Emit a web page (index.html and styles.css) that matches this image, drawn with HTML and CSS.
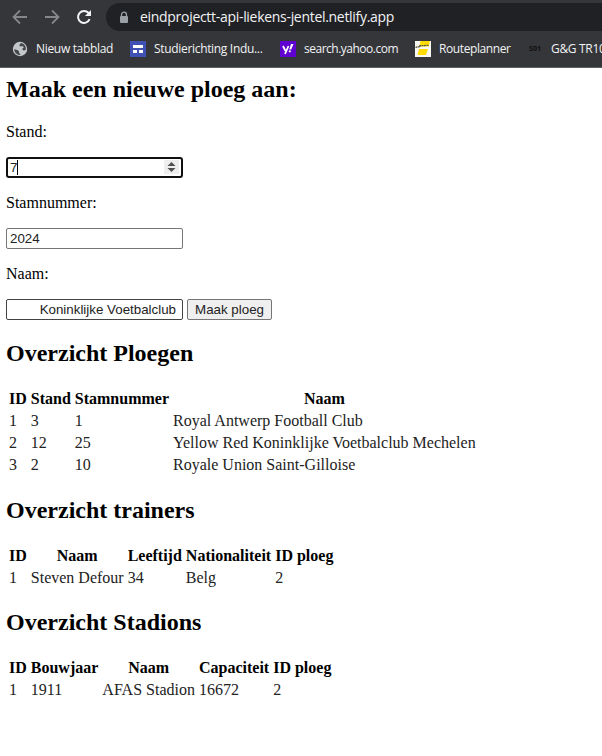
FILE: index.html
```html
<!DOCTYPE html>
<html lang="nl">
<head>
<meta charset="utf-8">
<title>Ploegen</title>
<link rel="stylesheet" href="styles.css">
</head>
<body>
<header class="browser">
  <div class="toolbar">
    <svg class="nav" viewBox="0 0 16 16"><path d="M15 8H2M8 1.5L1.5 8L8 14.5"/></svg>
    <svg class="nav" viewBox="0 0 16 16"><path d="M1 8H14M8 1.5L14.5 8L8 14.5"/></svg>
    <svg class="nav reload" viewBox="0 0 16 16"><path d="M13.6 10.200A6 6 0 1 1 12.600 4L14 5.500"/><path class="tip" d="M15 1v6H9z"/></svg>
    <div class="address">
      <svg class="lock" viewBox="0 0 10 12"><path d="M2.5 5V3.2a2.5 2.5 0 0 1 5 0V5" fill="none" stroke="#9aa0a6" stroke-width="1.3"/><rect x="1" y="4.4" width="8" height="7.2" rx="1" fill="#9aa0a6"/></svg>
      <span class="url">eindprojectt-api-liekens-jentel.netlify.app</span>
    </div>
  </div>
  <nav class="bookmarks">
    <a class="bookmark b1"><svg viewBox="0 0 16 16"><circle cx="8" cy="8" r="7.2" fill="#c4c7ca"/><path d="M2.2 8.2L5.5 9l1.6 1.6v1.2L8.6 14C5 14.200 2.200 11.500 2.200 8.200zM9 2l-1.500 1.700v1.600h3.500l.8 1.300-1.800 1.300 1.500 1.600 2.200-.6C14.500 5.500 12 2.400 9 2z" fill="#45474a"/></svg><span>Nieuw tabblad</span></a>
    <a class="bookmark b2"><svg viewBox="0 0 16 16"><path fill="#3f51b5" d="M0 0h16v16H0z"/><path fill="#fff" d="M3 4h10v3H3zM3 9h4v3H3zM9 9h4v3H9z"/></svg><span>Studierichting Indu...</span></a>
    <a class="bookmark b3"><svg viewBox="0 0 16 16"><path fill="#5f01d1" d="M0 0h16v16H0z"/><path fill="none" stroke="#fff" stroke-width="1.8" d="M3 5l2.500 5M8.500 5L5 13"/><path fill="#fff" d="M11 3h2.500L11.200 8.500H9.300z"/><circle cx="9.800" cy="10.300" r="1.100" fill="#fff"/></svg><span>search.yahoo.com</span></a>
    <a class="bookmark b4"><svg viewBox="0 0 16 16"><path fill="#f8f8f5" d="M0 0h16v16H0z"/><path fill="#ffdc00" d="M5.500 0H15l-1.200 5.500H4.600zM4 8h9l-2 6H2.500z"/><path stroke="#5a5541" stroke-width="1.300" stroke-dasharray="2 .5" d="M.5 6.400L6 5.300M4 4.800l10-.5"/></svg><span>Routeplanner</span></a>
    <a class="bookmark b5"><b class="s01">S01</b><span>G&amp;G TR10</span></a>
  </nav>
</header>
<main>
  <h2>Maak een nieuwe ploeg aan:</h2>
  <form>
    <p>Stand:</p>
    <div class="row number">
      <input class="focused" value="7"><i class="caret"></i>
      <svg class="spinner" viewBox="0 0 15 14"><path fill="#eee" d="M0 0h15v14H0z"/><path fill="#505050" d="M3.500 6L7.500 2l4 4zM3.500 8h8l-4 4z"/></svg>
    </div>
    <p>Stamnummer:</p>
    <div class="row"><input value="2024"></div>
    <p>Naam:</p>
    <div class="row"><input class="name" value="Koninklijke Voetbalclub"><button type="button">Maak ploeg</button></div>
  </form>
  <h2>Overzicht Ploegen</h2>
  <table>
    <tr><th>ID</th><th>Stand</th><th>Stamnummer</th><th>Naam</th></tr>
    <tr><td>1</td><td>3</td><td>1</td><td>Royal Antwerp Football Club</td></tr>
    <tr><td>2</td><td>12</td><td>25</td><td>Yellow Red Koninklijke Voetbalclub Mechelen</td></tr>
    <tr><td>3</td><td>2</td><td>10</td><td>Royale Union Saint-Gilloise</td></tr>
  </table>
  <h2>Overzicht trainers</h2>
  <table>
    <tr><th>ID</th><th>Naam</th><th>Leeftijd</th><th>Nationaliteit</th><th>ID ploeg</th></tr>
    <tr><td>1</td><td>Steven Defour</td><td>34</td><td>Belg</td><td>2</td></tr>
  </table>
  <h2 class="stadiums">Overzicht Stadions</h2>
  <table>
    <tr><th>ID</th><th>Bouwjaar</th><th>Naam</th><th>Capaciteit</th><th>ID ploeg</th></tr>
    <tr><td>1</td><td>1911</td><td>AFAS Stadion</td><td>16672</td><td>2</td></tr>
  </table>
</main>
</body>
</html>
```
FILE: styles.css
```css
* { box-sizing: border-box; }
body { margin: 0; background: #fff; color: #000; font: 16px/18px "Liberation Serif", serif; overflow: hidden; }
.browser { height: 68px; background: #35363a; border-bottom: 1px solid #5d5e61; color: #f1f3f4; font-family: "Open Sans", "Noto Sans", sans-serif; overflow: hidden; white-space: nowrap; }
.toolbar { display: flex; align-items: center; height: 34px; padding-left: 12px; gap: 16px; }
.nav { width: 16px; height: 16px; flex: none; fill: none; stroke: #85878a; stroke-width: 1.8; }
.reload { stroke: #f1f3f4; stroke-width: 2; }
.tip { fill: #f1f3f4; stroke: none; }
.address { display: flex; align-items: center; align-self: flex-start; flex: 1; height: 28px; margin: 3px -20px 0 -2px; padding-left: 13px; border-radius: 14px 0 0 14px; background: #202124; font-size: 14px; }
.lock { width: 10px; height: 13px; margin-right: 11px; }
.url { letter-spacing: -0.3px; }
.bookmarks { display: flex; height: 30px; align-items: center; font-size: 12px; }
.bookmark { display: flex; align-items: center; gap: 8px; flex: none; letter-spacing: -0.32px; }
.bookmark svg { width: 16px; height: 16px; flex: none; }
.b1 { width: 130px; padding-left: 12px; }
.b2 { width: 150px; }
.b3 { width: 135px; letter-spacing: -0.5px; }
.b4 { width: 112px; letter-spacing: -0.4px; }
.s01 { width: 16px; font-size: 7px; letter-spacing: 0; color: #101010; text-align: center; }
main { padding: 8px 6px; }
h2 { margin: 20px 0; font-size: 24px; line-height: 27px; }
main > h2:first-child { margin-top: 0; }
h2.stadiums { margin-top: 19px; }
p { margin: 16px 0; }
.row { display: flex; gap: 4px; height: 21px; }
.number { position: relative; width: 177px; }
input { width: 177px; height: 21px; margin: 0; padding: 1px 3px; border: 1px solid #767676; border-radius: 2px; background: #fff; color: #222; font: 13.333px "Liberation Sans", sans-serif; outline: none; }
.focused { border: 2px solid #101010; border-radius: 3px; padding: 0 2px; }
.name { text-align: right; padding-right: 6px; border-color: #444; }
.caret { position: absolute; left: 11px; top: 3px; width: 1px; height: 15px; background: #000; }
.spinner { position: absolute; right: 4px; top: 3px; width: 15px; height: 14px; }
button { width: 85px; height: 21px; padding: 0; border: 1px solid #767676; border-radius: 2px; background: #efefef; color: #222; font: 13.333px "Liberation Sans", sans-serif; }
table { border-spacing: 2px; }
th, td { padding: 1px; }
td { color: #222; }
```
